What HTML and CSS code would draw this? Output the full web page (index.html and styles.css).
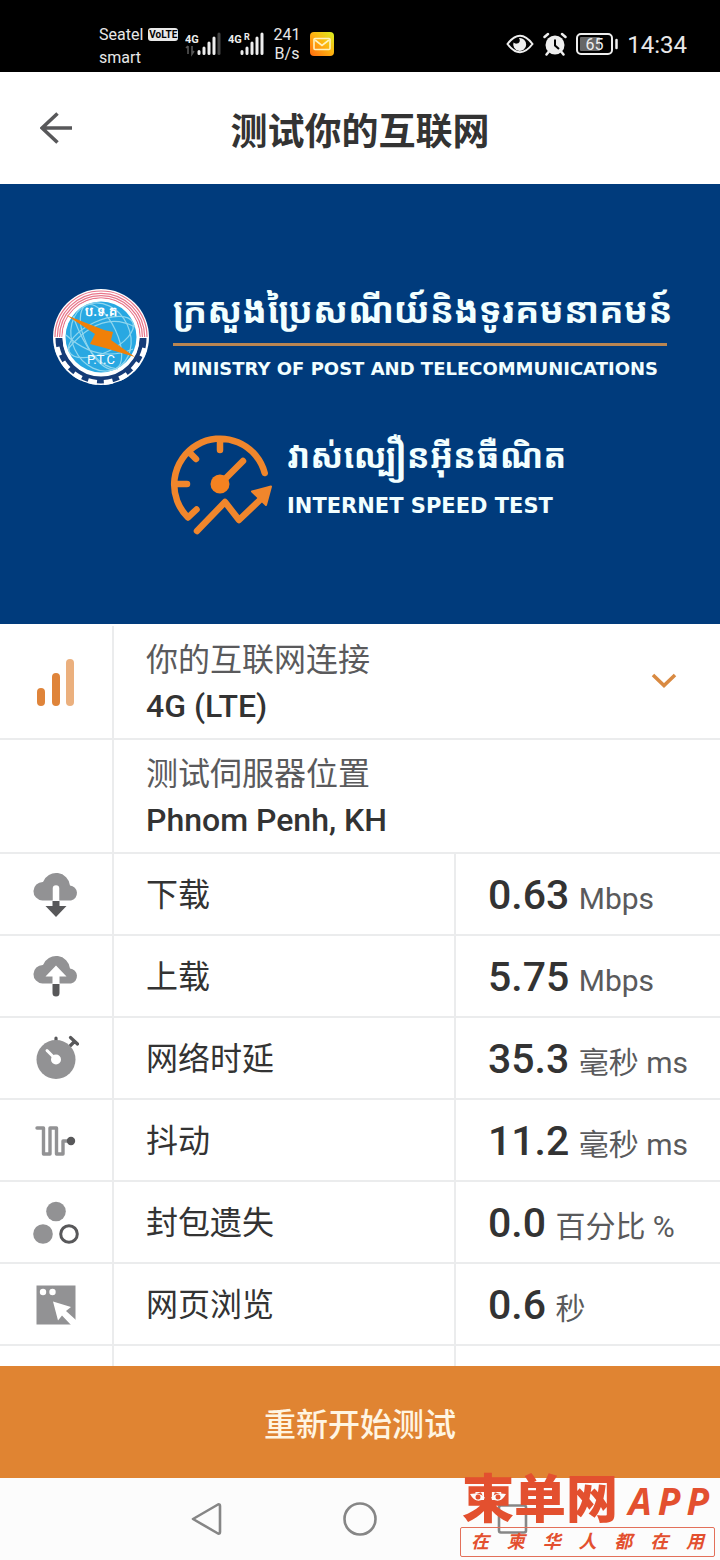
FILE: index.html
```html
<!DOCTYPE html>
<html lang="zh-CN">
<head>
<meta charset="utf-8">
<meta name="viewport" content="width=device-width, initial-scale=1">
<title>测试你的互联网</title>
<link rel="stylesheet" href="styles.css">
</head>
<body>
<div class="status">
  <div class="carrier">
    <div class="carrier-row">Seatel <span class="volte">VoLTE</span></div>
    <div>smart</div>
  </div>
  <svg class="signal" width="36" height="26" viewBox="0 0 36 26" aria-hidden="true">
    <text x="0" y="12" class="signal-text">4G</text>
    <path d="M3 15v8M1 17l2-2M7 15v8l2-3" stroke="#555" stroke-width="1.6" fill="none"/>
    <path d="M14 20.500v2M19 17v5.500M24 12v10.500M29 7v15.500" stroke="#eee" stroke-width="3" stroke-linecap="round"/>
    <path d="M34 3v19.500" stroke="#444" stroke-width="3" stroke-linecap="round"/>
  </svg>
  <svg class="signal" width="36" height="26" viewBox="0 0 36 26" aria-hidden="true">
    <text x="0" y="12" class="signal-text">4G</text>
    <text x="16" y="9" class="signal-roam">R</text>
    <path d="M14 20.500v2M19 17v5.500M24 12v10.500M29 7v15.500M34 3v19.500" stroke="#eee" stroke-width="3" stroke-linecap="round"/>
  </svg>
  <div class="speed"><div>241</div><div>B/s</div></div>
  <svg class="mail" width="24" height="24" viewBox="0 0 24 24" aria-hidden="true">
    <defs><linearGradient id="mg" x1="0" y1="1" x2="1" y2="0"><stop offset="0" stop-color="#ff6a10"/><stop offset=".5" stop-color="#ffb010"/><stop offset="1" stop-color="#d8f020"/></linearGradient></defs>
    <rect width="24" height="24" rx="4" fill="url(#mg)"/>
    <rect x="4" y="6.500" width="16" height="11" rx="1" fill="none" stroke="#fff3c0" stroke-width="1.600"/>
    <path d="M5 8l7 5.500L19 8" fill="none" stroke="#fff3c0" stroke-width="1.600"/>
  </svg>
  <div class="status-right">
    <svg width="28" height="20" viewBox="0 0 28 20" aria-hidden="true">
      <path d="M1.500 10Q14-6.500 26.500 10Q14 26.500 1.500 10Z" fill="none" stroke="#eee" stroke-width="2"/>
      <path d="M13 4a6.500 6.500 0 1 1-5.500 4.500a4 4 0 0 0 6-.5a4 4 0 0 0-.5-4Z" fill="#eee"/>
    </svg>
    <svg width="24" height="24" viewBox="0 0 24 24" aria-hidden="true">
      <circle cx="12" cy="13" r="9.500" fill="#eee"/>
      <path d="M1.500 5L5 2M22.500 5L19 2" stroke="#eee" stroke-width="2.500" stroke-linecap="round"/>
      <path d="M5.500 20l-2 2.500M18.500 20l2 2.500" stroke="#eee" stroke-width="2.500" stroke-linecap="round"/>
      <path d="M12 7.500v6l4 3.500" fill="none" stroke="#000" stroke-width="2"/>
    </svg>
    <svg width="42" height="22" viewBox="0 0 42 22" aria-hidden="true">
      <rect x="1" y="1" width="35" height="20" rx="4" fill="none" stroke="#eee" stroke-width="2"/>
      <rect x="4" y="4" width="20" height="14" rx="1" fill="#666"/>
      <path d="M40.500 7v8" stroke="#eee" stroke-width="2.500" stroke-linecap="round"/>
      <text x="18.500" y="17" text-anchor="middle" class="battery-text">65</text>
    </svg>
    <time class="clock">14:34</time>
  </div>
</div>

<header class="appbar">
  <button class="back" type="button" aria-label="返回">
    <svg width="32" height="32" viewBox="0 0 32 32"><path d="M32 16H2M17.500 1.500L2 16l15.500 14.500" fill="none" stroke="#58585a" stroke-width="3.600"/></svg>
  </button>
  <h1 class="title">测试你的互联网</h1>
</header>

<section class="banner">
  <div class="ministry">
    <svg width="96" height="96" viewBox="0 0 96 96" aria-hidden="true">
      <circle cx="48" cy="48" r="48" fill="#fff"/>
      <path d="M2 48a46 46 0 0 1 92 0M4.300 48a43.700 43.700 0 0 1 87.400 0M6.600 48a41.400 41.400 0 0 1 82.800 0M8.900 48a39.100 39.100 0 0 1 78.200 0" fill="none" stroke="#e8778c" stroke-width="1.200"/>
      <path d="M6 49a42 42 0 0 0 84 0" fill="none" stroke="#153c78" stroke-width="7"/>
      <path d="M4 58a45 45 0 0 0 88 0" fill="none" stroke="#fff" stroke-width="5" stroke-dasharray="9 7"/>
      <circle cx="48" cy="48" r="38.500" fill="#fff"/>
      <circle cx="48" cy="48" r="35.500" fill="#28a8e2"/>
      <g fill="none" stroke="#8fd6ee" stroke-width="1.200">
        <ellipse cx="48" cy="48" rx="16" ry="35" transform="rotate(-25 48 48)"/>
        <ellipse cx="48" cy="48" rx="29" ry="35" transform="rotate(-25 48 48)"/>
        <ellipse cx="48" cy="48" rx="16" ry="35" transform="rotate(65 48 48)"/>
        <path d="M15 60Q48 20 82 38M20 27Q38 78 65 80M13 46Q45 75 80 60"/>
      </g>
      <text x="48" y="27" text-anchor="middle" class="emblem-kh">ប.ទ.គ</text>
      <text x="48" y="75" text-anchor="middle" class="emblem-en">P.T.C</text>
      <path d="M13 26L51 41l9 2-2 8 24 17-30-9-15-4 5-10Z" fill="#f08008"/>
    </svg>
    <div class="ministry-text">
      <div class="khmer ministry-kh" lang="km">ក្រសួងប្រៃសណីយ៍និងទូរគមនាគមន៍</div>
      <div class="ministry-en">MINISTRY OF POST AND TELECOMMUNICATIONS</div>
    </div>
  </div>
  <div class="product">
    <svg width="102" height="102" viewBox="0 0 102 102" aria-hidden="true">
      <path d="M94.700 39A46 46 0 1 0 18 83.500L26.500 75.500M50 7v9M20 19l6 6M5 50h12M50 50l23-23M27 97l28-29L69 86 92 64" fill="none" stroke="#f0862c" stroke-width="6.500" stroke-linecap="round" stroke-linejoin="round"/>
      <circle cx="50" cy="50" r="9.500" fill="#f58220"/>
      <path d="M82 57.500L101 52.500L96 71Z" fill="#f0862c" stroke="#f0862c" stroke-width="2" stroke-linejoin="round"/>
    </svg>
    <div class="product-text">
      <div class="khmer product-kh" lang="km">វាស់ល្បឿនអ៊ីនធឺណិត</div>
      <div class="product-en">INTERNET SPEED TEST</div>
    </div>
  </div>
</section>

<main class="results">
  <table class="grid">
    <colgroup><col class="col-icon"><col><col class="col-value"></colgroup>
    <tbody>
      <tr class="tall">
        <td class="icon">
          <svg width="40" height="50" viewBox="0 0 40 50" aria-hidden="true"><path d="M5 34v10M20 19v25" stroke="#df843a" stroke-width="8" stroke-linecap="round"/><path d="M34 5v39" stroke="#ebb07e" stroke-width="8" stroke-linecap="round"/></svg>
        </td>
        <td colspan="2">
          <div class="info">
            <div><div class="caption">你的互联网连接</div><div class="strong">4G (LTE)</div></div>
            <button class="expand" type="button" aria-label="展开"><svg width="26" height="20" viewBox="0 0 26 20"><path d="M2 2l11 10.500L24 2" fill="none" stroke="#d98a42" stroke-width="3.600"/></svg></button>
          </div>
        </td>
      </tr>
      <tr class="tall">
        <td class="icon"></td>
        <td colspan="2"><div class="info"><div><div class="caption">测试伺服器位置</div><div class="strong">Phnom Penh, KH</div></div></div></td>
      </tr>
      <tr>
        <td class="icon"><svg width="46" height="46" viewBox="0 0 46 46" aria-hidden="true"><path d="M9.500 29.500a9.300 9.300 0 0 1 .5-18.600A14 14 0 0 1 37 14.500a7.600 7.600 0 0 1 1 15Z" fill="#929294"/><path d="M23 17.500v12" stroke="#fff" stroke-width="6.500" stroke-linecap="round"/><path d="M19.500 30h7v5h7L23 46 12.500 35h7Z" fill="#58585a"/></svg></td>
        <th scope="row">下载</th><td class="value"><b>0.63</b> Mbps</td>
      </tr>
      <tr>
        <td class="icon"><svg width="46" height="46" viewBox="0 0 46 46" aria-hidden="true"><path d="M9.500 30.500a9.300 9.300 0 0 1 .5-18.600A14 14 0 0 1 37 15.500a7.600 7.600 0 0 1 1 15Z" fill="#929294"/><path d="M19.500 31v-7.500h-7L23 12.500l10.500 11h-7V31Z" fill="#fff"/><path d="M19.500 31h7v9a3.500 3.500 0 0 1-7 0Z" fill="#58585a"/></svg></td>
        <th scope="row">上载</th><td class="value"><b>5.75</b> Mbps</td>
      </tr>
      <tr>
        <td class="icon"><svg width="46" height="46" viewBox="0 0 46 46" aria-hidden="true"><path d="M23 7V3M37 11l4-4M37.500 2.500l7 6.500" stroke="#58585a" stroke-width="3.200" stroke-linecap="round"/><circle cx="23" cy="24.500" r="19.500" fill="#929294"/><circle cx="23" cy="24.500" r="5" fill="#fff"/><path d="M23 24.500L14 15.500" stroke="#fff" stroke-width="3" stroke-linecap="round"/></svg></td>
        <th scope="row">网络时延</th><td class="value"><b>35.3</b> 毫秒 ms</td>
      </tr>
      <tr>
        <td class="icon"><svg width="46" height="46" viewBox="0 0 46 46" aria-hidden="true"><path d="M4 11h6.500v26H17V11h6.500v26H30V24h8" fill="none" stroke="#929294" stroke-width="3.400" stroke-linecap="round" stroke-linejoin="round"/><circle cx="38" cy="24" r="4.200" fill="#58585a"/></svg></td>
        <th scope="row">抖动</th><td class="value"><b>11.2</b> 毫秒 ms</td>
      </tr>
      <tr>
        <td class="icon"><svg width="46" height="46" viewBox="0 0 46 46" aria-hidden="true"><circle cx="23" cy="12.500" r="9.800" fill="#929294"/><circle cx="10" cy="35" r="9.800" fill="#929294"/><circle cx="36" cy="35" r="8.300" fill="none" stroke="#58585a" stroke-width="3"/></svg></td>
        <th scope="row">封包遗失</th><td class="value"><b>0.0</b> 百分比 %</td>
      </tr>
      <tr>
        <td class="icon"><svg width="46" height="46" viewBox="0 0 46 46" aria-hidden="true"><path d="M3.500 4.500h39v39h-39Z" fill="#929294"/><circle cx="10" cy="11" r="3.200" fill="#fff"/><circle cx="19.500" cy="11" r="3.200" fill="#fff"/><path d="M20 20.500l18 5.500-5 4 10 9v5h-5l-9-9.500-4 5Z" fill="#fff"/></svg></td>
        <th scope="row">网页浏览</th><td class="value"><b>0.6</b> 秒</td>
      </tr>
      <tr><td class="icon"></td><th scope="row"></th><td class="value"></td></tr>
    </tbody>
  </table>
</main>

<button class="restart" type="button">重新开始测试</button>

<footer class="nav">
  <button type="button" aria-label="后退"><svg width="34" height="36" viewBox="0 0 34 36"><path d="M3 18L28 3.500Q30 3 30 5v26q0 2-2 1.500Z" fill="none" stroke="#868686" stroke-width="2.600" stroke-linejoin="round"/></svg></button>
  <button type="button" aria-label="主页"><svg width="36" height="36" viewBox="0 0 36 36"><circle cx="18" cy="18" r="15.500" fill="none" stroke="#868686" stroke-width="2.600"/></svg></button>
  <button type="button" aria-label="最近"><svg width="36" height="36" viewBox="0 0 36 36"><rect x="4" y="4.500" width="27" height="27" rx="2" fill="none" stroke="#868686" stroke-width="2.600"/></svg></button>
  <div class="mark">
    <div class="mark-name">
      <span class="mark-cn">柬单网</span>
      <span class="mark-app"><span>A</span><span>P</span><span>P</span></span>
      <svg class="mark-eyes" width="36" height="12" viewBox="0 0 36 12" aria-hidden="true">
        <path d="M0 2Q11 0 15 6Q6 13 0 2ZM36 2Q25 0 21 6Q30 13 36 2Z" fill="#fcfcfc"/>
        <circle cx="8" cy="5" r="2.500" fill="#e3502f"/><circle cx="28" cy="5" r="2.500" fill="#e3502f"/>
      </svg>
    </div>
    <div class="mark-line"><span>在</span><span>柬</span><span>华</span><span>人</span><span>都</span><span>在</span><span>用</span></div>
  </div>
</footer>
</body>
</html>
```
FILE: styles.css
```css
* { box-sizing: border-box; }
html { height: 100%; }
body {
  margin: 0;
  height: 100%;
  display: flex;
  flex-direction: column;
  background: #fff;
  color: #333;
  font-family: Roboto, "Noto Sans CJK SC", sans-serif;
}
button { border: 0; padding: 0; background: none; font: inherit; color: inherit; display: grid; place-items: center; }
svg { display: block; flex: none; }

.status {
  flex: none;
  height: 72px;
  padding: 16px 33px 0 99px;
  display: flex;
  align-items: center;
  background: #000;
  color: #e8e8e8;
  font-size: 16px;
}
.carrier { width: 86px; padding-top: 3px; line-height: 23px; white-space: nowrap; }
.carrier-row { display: flex; align-items: center; gap: 5px; }
.volte { padding: 0 1px; border-radius: 3px; background: #e8e8e8; color: #000; font-size: 10px; font-weight: 700; line-height: 13px; }
.signal { margin-right: 7px; }
.signal-text { fill: #eee; font-size: 11px; font-weight: 700; font-family: Roboto, sans-serif; }
.signal-roam { fill: #eee; font-size: 9px; font-weight: 700; font-family: Roboto, sans-serif; }
.speed { width: 34px; line-height: 19px; text-align: center; padding-right: 2px; }
.mail { margin-left: 5px; }
.status-right { margin-left: auto; display: flex; align-items: center; gap: 9px; }
.battery-text { fill: #eee; font-size: 16px; font-family: Roboto, sans-serif; }
.clock { padding-top: 2px; font-size: 24px; line-height: 28px; }

.appbar {
  flex: none;
  height: 112px;
  padding: 0 40px;
  display: grid;
  grid-template-columns: 32px 1fr 32px;
  align-items: center;
}
.title { margin: 0; padding-top: 9px; font-size: 37px; line-height: 48px; font-weight: 700; text-align: center; }

.banner {
  flex: none;
  height: 440px;
  padding-top: 105px;
  display: flex;
  flex-direction: column;
  gap: 49px;
  background: #003b7c;
  color: #f2ffff;
}
.ministry { display: flex; justify-content: center; align-items: flex-start; gap: 24px; }
.ministry-text { width: 494px; }
.khmer { font-family: "Noto Sans Khmer", "Khmer OS", "Noto Sans", sans-serif; font-weight: 700; line-height: 42px; white-space: nowrap; }
.ministry-kh { height: 57px; border-bottom: 3px solid #b98552; font-size: 36px; }
.ministry-en { padding-top: 13px; font: 700 18px/20px "DejaVu Sans", sans-serif; white-space: nowrap; }
.product { padding-left: 14px; display: flex; justify-content: center; align-items: flex-start; gap: 15px; }
.product-text { width: 277px; }
.product-kh { height: 56px; font-size: 34px; }
.product-en { padding-top: 4px; font: 700 21px/24px "DejaVu Sans", sans-serif; white-space: nowrap; }
.emblem-kh { fill: #fff; font-size: 13px; font-weight: 700; }
.emblem-en { fill: #fff; font-size: 13px; }

.results { flex: 1; min-height: 0; overflow: hidden; padding-top: 2px; }
.grid { width: 100%; table-layout: fixed; border-collapse: separate; border-spacing: 0; }
.col-icon { width: 114px; }
.col-value { width: 264px; }
.grid td, .grid th { height: 82px; padding: 0 0 0 32px; border-bottom: 2px solid #ebeced; text-align: left; vertical-align: middle; }
.grid .tall td { height: 114px; padding-top: 2px; }
.grid .icon { padding: 0; border-right: 2px solid #ebeced; }
.icon svg { margin: 0 auto; }
.grid th { padding-top: 2px; border-right: 2px solid #ebeced; font-size: 32px; line-height: 40px; font-weight: 400; }
.grid .value { padding-top: 6px; color: #5a5a5c; font-size: 30px; line-height: 48px; white-space: nowrap; }
.value b { margin-right: 2px; color: #333; font-size: 41px; font-weight: 500; }
.info { display: flex; align-items: center; justify-content: space-between; padding-right: 43px; }
.caption { color: #5a5a5c; font-size: 32px; line-height: 46px; }
.strong { font-size: 32px; line-height: 46px; font-weight: 500; }

.restart { flex: none; height: 112px; background: #e08432; color: #fff5e2; font-size: 32px; font-weight: 500; }

.nav {
  position: relative;
  flex: none;
  height: 82px;
  padding: 0 130px;
  display: grid;
  grid-template-columns: repeat(3, 1fr);
  background: #fcfcfc;
}
.mark { position: absolute; right: 5px; bottom: 3px; width: 255px; color: #e3502f; }
.mark-name { position: relative; display: flex; align-items: center; justify-content: space-between; padding: 0 6px 0 2px; height: 52px; }
.mark-cn { font-size: 52px; line-height: 52px; font-weight: 900; }
.mark-app { display: flex; gap: 6px; font-family: "Open Sans", sans-serif; font-size: 37px; line-height: 52px; font-style: italic; font-weight: 700; }
.mark-eyes { position: absolute; left: 10px; top: 17px; }
.mark-line { display: flex; justify-content: space-between; padding: 0 10px; border: 1px solid #e3705a; border-radius: 2px; font-size: 18px; line-height: 28px; font-style: italic; font-weight: 700; }
```
